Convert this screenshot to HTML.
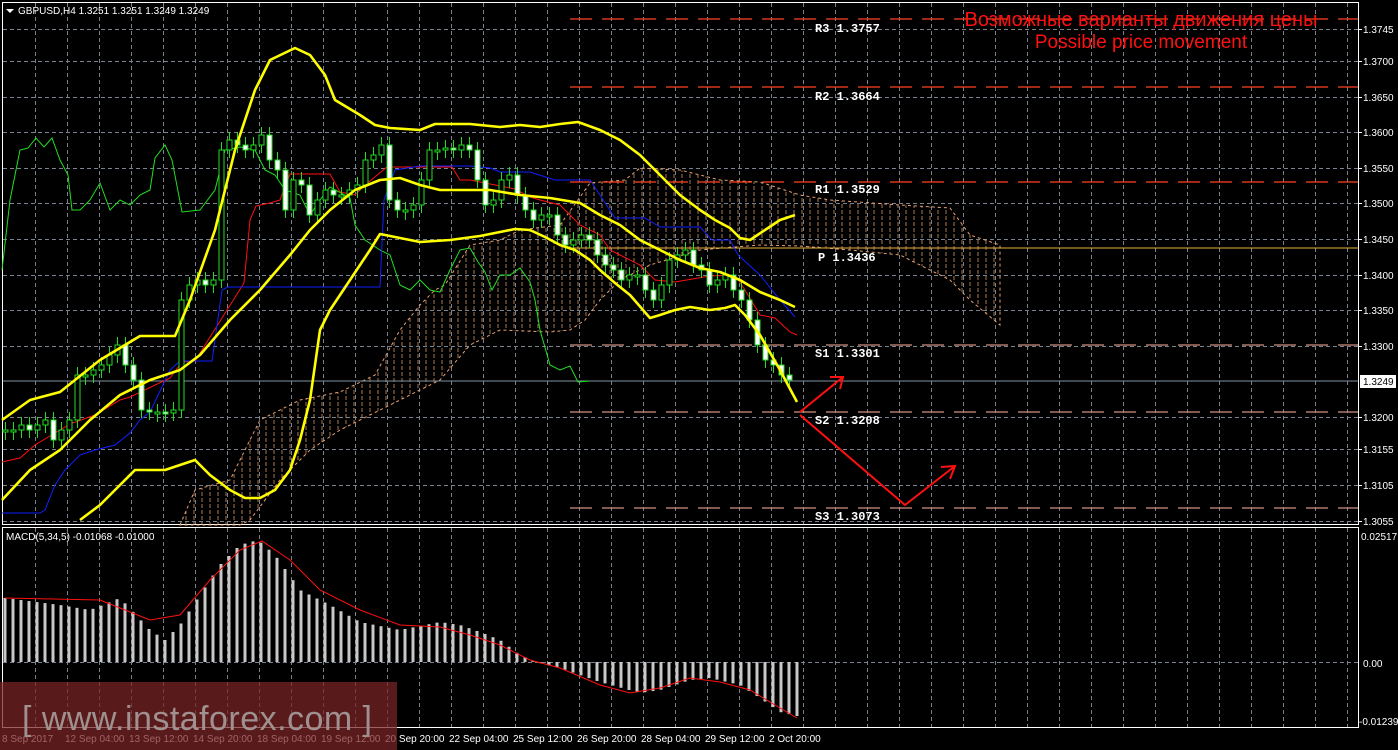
<!DOCTYPE html>
<html><head><meta charset="utf-8"><style>
html,body{margin:0;padding:0;background:#000;width:1398px;height:750px;overflow:hidden}
svg{display:block}
</style></head><body>
<svg id="s" width="1398" height="750" xmlns="http://www.w3.org/2000/svg" font-family="Liberation Sans,sans-serif">
<defs>
<pattern id="hatch" width="8" height="6" patternUnits="userSpaceOnUse">
<line x1="2" y1="0" x2="2" y2="4" stroke="#e0a070" stroke-width="1" opacity="0.75"/>
</pattern>
</defs>
<rect width="1398" height="750" fill="#000"/>
<g id="grid" stroke="#7a8290" stroke-width="1" stroke-dasharray="4,3"></g>
<rect x="2.5" y="2.5" width="1356" height="522" fill="none" stroke="#fff"/>
<rect x="2.5" y="527.5" width="1356" height="200" fill="none" stroke="#fff"/>
<polygon points="180,525 195,490 230,480 260,420 300,400 340,392 375,375 400,330 420,305 435,290 445,285 470,245 500,240 520,230 560,225 590,183 625,180 640,168 680,170 720,180 760,182 800,195 830,200 900,205 950,208 970,235 1000,245 1000,325 970,300 950,280 900,255 850,250 800,246 760,245 700,250 650,265 620,280 600,300 585,320 570,330 550,332 500,330 470,345 440,380 410,395 380,410 340,430 310,450 280,480 250,520 240,525" fill="url(#hatch)" stroke="#e8a070" stroke-width="1" stroke-dasharray="3,3"/>
<g stroke-width="1.3" stroke-dasharray="22,10">
<line x1="570" y1="19" x2="1358" y2="19" stroke="#ff4020"/>
<line x1="570" y1="87" x2="1358" y2="87" stroke="#ff4020"/>
<line x1="570" y1="182" x2="1358" y2="182" stroke="#ff4020"/>
<line x1="570" y1="345" x2="1358" y2="345" stroke="#d09080"/>
<line x1="570" y1="412" x2="1358" y2="412" stroke="#d09080"/>
<line x1="570" y1="508" x2="1358" y2="508" stroke="#d09080"/>
</g>
<line x1="570" y1="248" x2="1358" y2="248" stroke="#e8b040" stroke-width="1"/>
<line x1="3" y1="381" x2="1358" y2="381" stroke="#8090a0" stroke-width="1"/>
<g style="font-family:'Liberation Mono',monospace" font-size="12" font-weight="bold" fill="#fff">
<text x="815" y="32">R3 1.3757</text>
<text x="815" y="100">R2 1.3664</text>
<text x="815" y="193">R1 1.3529</text>
<text x="818" y="261">P 1.3436</text>
<text x="815" y="357">S1 1.3301</text>
<text x="815" y="424">S2 1.3208</text>
<text x="815" y="520">S3 1.3073</text>
</g>
<polyline fill="none" stroke="#22dd22" stroke-width="1" points="2,270 10,200 20,150 28,148 36,138 44,147 52,138 60,160 68,175 72,210 80,210 90,200 100,183 110,210 120,200 130,205 140,195 150,190 155,158 165,145 172,160 182,212 200,210 215,190 225,150 240,147 255,150 265,170 275,175 285,190 300,195 310,215 320,200 330,187 350,198 355,225 365,240 380,250 390,255 395,270 400,285 410,290 420,280 430,290 440,292 450,270 460,250 470,248 478,262 485,272 492,290 500,275 510,275 520,268 530,282 535,300 540,330 550,365 560,370 570,366 578,382 590,381"/>
<polyline fill="none" stroke="#ff1010" stroke-width="1" points="2,462 20,458 35,445 60,430 70,424 95,415 120,400 130,397 170,378 182,362 195,361 244,283 250,220 256,206 270,203 280,200 290,174 330,174 340,192 355,195 365,185 387,167 452,167 460,180 470,180 515,189 530,197 540,200 560,205 580,225 600,235 610,250 620,255 640,265 655,280 675,282 710,276 735,275 745,290 760,315 775,318 790,332 797,335"/>
<polyline fill="none" stroke="#1020ff" stroke-width="1" points="2,513 40,513 45,510 55,485 65,470 80,455 95,450 115,445 130,433 140,420 150,412 170,370 180,361 190,361 212,361 222,290 228,287 380,287 384,200 395,170 420,166 470,166 490,168 500,172 530,172 555,180 590,180 600,195 615,218 645,218 660,227 700,227 712,240 730,240 738,255 760,275 780,300 795,317"/>
<g id="candles"></g>
<g fill="none" stroke="#ffff00" stroke-width="2.6" stroke-linejoin="round">
<polyline points="2,420 30,400 60,392 100,360 140,336 175,336 190,300 215,230 235,150 255,90 270,60 295,48 310,55 325,75 335,100 360,115 375,125 390,128 420,130 435,124 470,124 500,127 520,125 540,127 560,124 578,122 600,130 620,140 640,155 660,175 680,195 700,210 715,220 730,228 740,238 750,240 765,230 780,220 795,215"/>
<polyline points="2,500 30,470 60,450 90,420 120,395 150,380 180,370 200,355 230,320 260,290 290,255 310,230 330,210 355,190 380,180 400,178 420,185 440,190 460,190 490,190 520,195 550,198 580,203 600,215 620,225 640,240 660,250 680,260 700,268 720,272 740,280 760,292 780,300 795,307"/>
<polyline points="80,520 100,505 120,485 135,470 150,470 165,470 180,465 195,460 210,475 230,490 245,498 260,498 275,490 290,470 300,440 310,400 320,330 330,310 350,280 370,250 380,234 400,238 420,242 450,240 480,236 500,232 515,229 530,230 545,237 560,245 575,250 590,260 600,270 615,283 630,295 650,318 660,315 675,310 690,307 710,310 725,308 735,305 745,315 760,335 780,370 797,402"/>
</g>
<g id="macd"></g>
<g stroke="#ff1010" stroke-width="2" fill="none">
<polyline points="800,412 843,377"/>
<polyline points="830,377 843,377 840,389"/>
<polyline points="800,415 905,505 955,466"/>
<polyline points="941,467 955,466 950,479"/>
</g>
<text x="1141" y="26" font-size="20" fill="#ff1010" text-anchor="middle">Возможные варианты движения цены</text>
<text x="1141" y="48" font-size="19" fill="#ff1010" text-anchor="middle">Possible price movement</text>
<polygon points="6,9 14,9 10,13" fill="#fff"/>
<text x="18" y="14" font-size="10" fill="#fff">GBPUSD,H4  1.3251 1.3251 1.3249 1.3249</text>
<text x="6" y="540" font-size="10" fill="#fff">MACD(5,34,5) -0.01068 -0.01000</text>
<g font-size="10" fill="#fff" id="raxis"></g>
<rect x="1360" y="375" width="36" height="13" fill="#fff"/>
<text x="1363" y="385" font-size="10" fill="#000">1.3249</text>
<text x="1361" y="540" font-size="10" fill="#fff">0.02517</text>
<text x="1363" y="667" font-size="10" fill="#fff">0.00</text>
<text x="1359" y="725" font-size="10" fill="#fff">-0.01239</text>
<g font-size="10" fill="#fff" id="baxis"></g>
<rect x="0" y="682" width="397" height="68" fill="#7a2424" opacity="0.72"/>
<text x="22" y="730" font-size="34" fill="#a09090" textLength="350" lengthAdjust="spacing">[ www.instaforex.com ]</text>
</svg>
<script>
(function(){
var NS="http://www.w3.org/2000/svg";
function el(p,t,a){var e=document.createElementNS(NS,t);for(var k in a)e.setAttribute(k,a[k]);p.appendChild(e);return e;}
var svg=document.getElementById('s');
var g=document.getElementById('grid');
for(var x=35;x<1358;x+=32){el(g,'line',{x1:x+.5,y1:3,x2:x+.5,y2:524});el(g,'line',{x1:x+.5,y1:528,x2:x+.5,y2:727});}
var ys=[29,61,97,132,168,203,239,275,310,346,417,449,485,521];
var lb=["1.3745","1.3700","1.3650","1.3600","1.3550","1.3500","1.3450","1.3400","1.3350","1.3300","1.3200","1.3155","1.3105","1.3055"];
var ra=document.getElementById('raxis');
ys.forEach(function(y,i){el(g,'line',{x1:3,y1:y+.5,x2:1358,y2:y+.5});var t=el(ra,'text',{x:1363,y:y+4});t.textContent=lb[i];el(svg,'line',{x1:1358,y1:y+.5,x2:1362,y2:y+.5,stroke:'#fff'});});
el(g,'line',{x1:3,y1:662.5,x2:1358,y2:662.5});
var ba=document.getElementById('baxis');
var bl=["8 Sep 2017","12 Sep 04:00","13 Sep 12:00","14 Sep 20:00","18 Sep 04:00","19 Sep 12:00","20 Sep 20:00","22 Sep 04:00","25 Sep 12:00","26 Sep 20:00","28 Sep 04:00","29 Sep 12:00","2 Oct 20:00"];
bl.forEach(function(s,i){var x=i==0?2:65+64*(i-1);var t=el(ba,'text',{x:x,y:742});t.textContent=s;});
var c=[430,430,425,430,425,420,440,430,420,375,375,370,365,355,345,365,380,410,412,412,413,410,300,285,280,285,280,150,140,145,150,145,135,160,170,210,180,185,215,200,190,195,195,190,185,160,155,145,200,210,210,205,180,150,150,148,150,145,150,180,205,200,180,175,195,210,220,215,215,235,245,240,235,240,255,265,270,280,275,275,290,300,285,260,255,250,265,270,285,280,275,290,300,320,345,360,365,375,380];
var cg=document.getElementById('candles');
var prev=432;
for(var i=0;i<c.length;i++){var x=5+8*i;if(x>792)x=792;var o=prev,cl=c[i];var tp=Math.min(o,cl),bt=Math.max(o,cl);if(bt-tp<2){bt=tp+2;}
el(cg,'line',{x1:x+.5,y1:tp-8,x2:x+.5,y2:bt+8,stroke:'#22dd22','stroke-width':1});
el(cg,'rect',{x:x-2,y:tp,width:5,height:bt-tp,fill:(cl>o?'#fff':'#000'),stroke:'#22dd22','stroke-width':1});
prev=cl;}
function interp(pts,x){for(var k=0;k<pts.length-1;k++){if(x>=pts[k][0]&&x<=pts[k+1][0]){var t=(x-pts[k][0])/(pts[k+1][0]-pts[k][0]);return pts[k][1]+t*(pts[k+1][1]-pts[k][1]);}}return pts[pts.length-1][1];}
var hp=[[5,598],[60,605],[90,610],[120,598],[150,630],[165,640],[180,625],[200,595],[220,565],[240,545],[258,540],[275,555],[300,590],[330,605],[360,622],[400,630],[440,622],[460,625],[480,632],[500,640],[520,655],[535,662],[560,668],[600,682],[640,693],[660,690],[690,680],[710,678],[740,685],[760,698],[780,712],[797,716]];
var mg=document.getElementById('macd');
for(var x=5;x<=797;x+=8){var y=interp(hp,x);el(mg,'rect',{x:x-1.5,y:Math.min(y,662),width:3,height:Math.abs(662-y)||1,fill:'#c8c8c8'});}
var sp=[[5,598],[100,600],[150,620],[180,615],[210,580],[240,550],[262,541],[290,560],[320,590],[360,610],[400,625],[440,627],[470,635],[500,645],[530,660],[560,668],[600,685],[630,693],[660,688],[690,678],[720,682],[750,690],[775,705],[797,718]];
el(mg,'polyline',{points:sp.map(function(p){return p.join(',')}).join(' '),fill:'none',stroke:'#ff1010','stroke-width':1});
})();
</script>
</body></html>
